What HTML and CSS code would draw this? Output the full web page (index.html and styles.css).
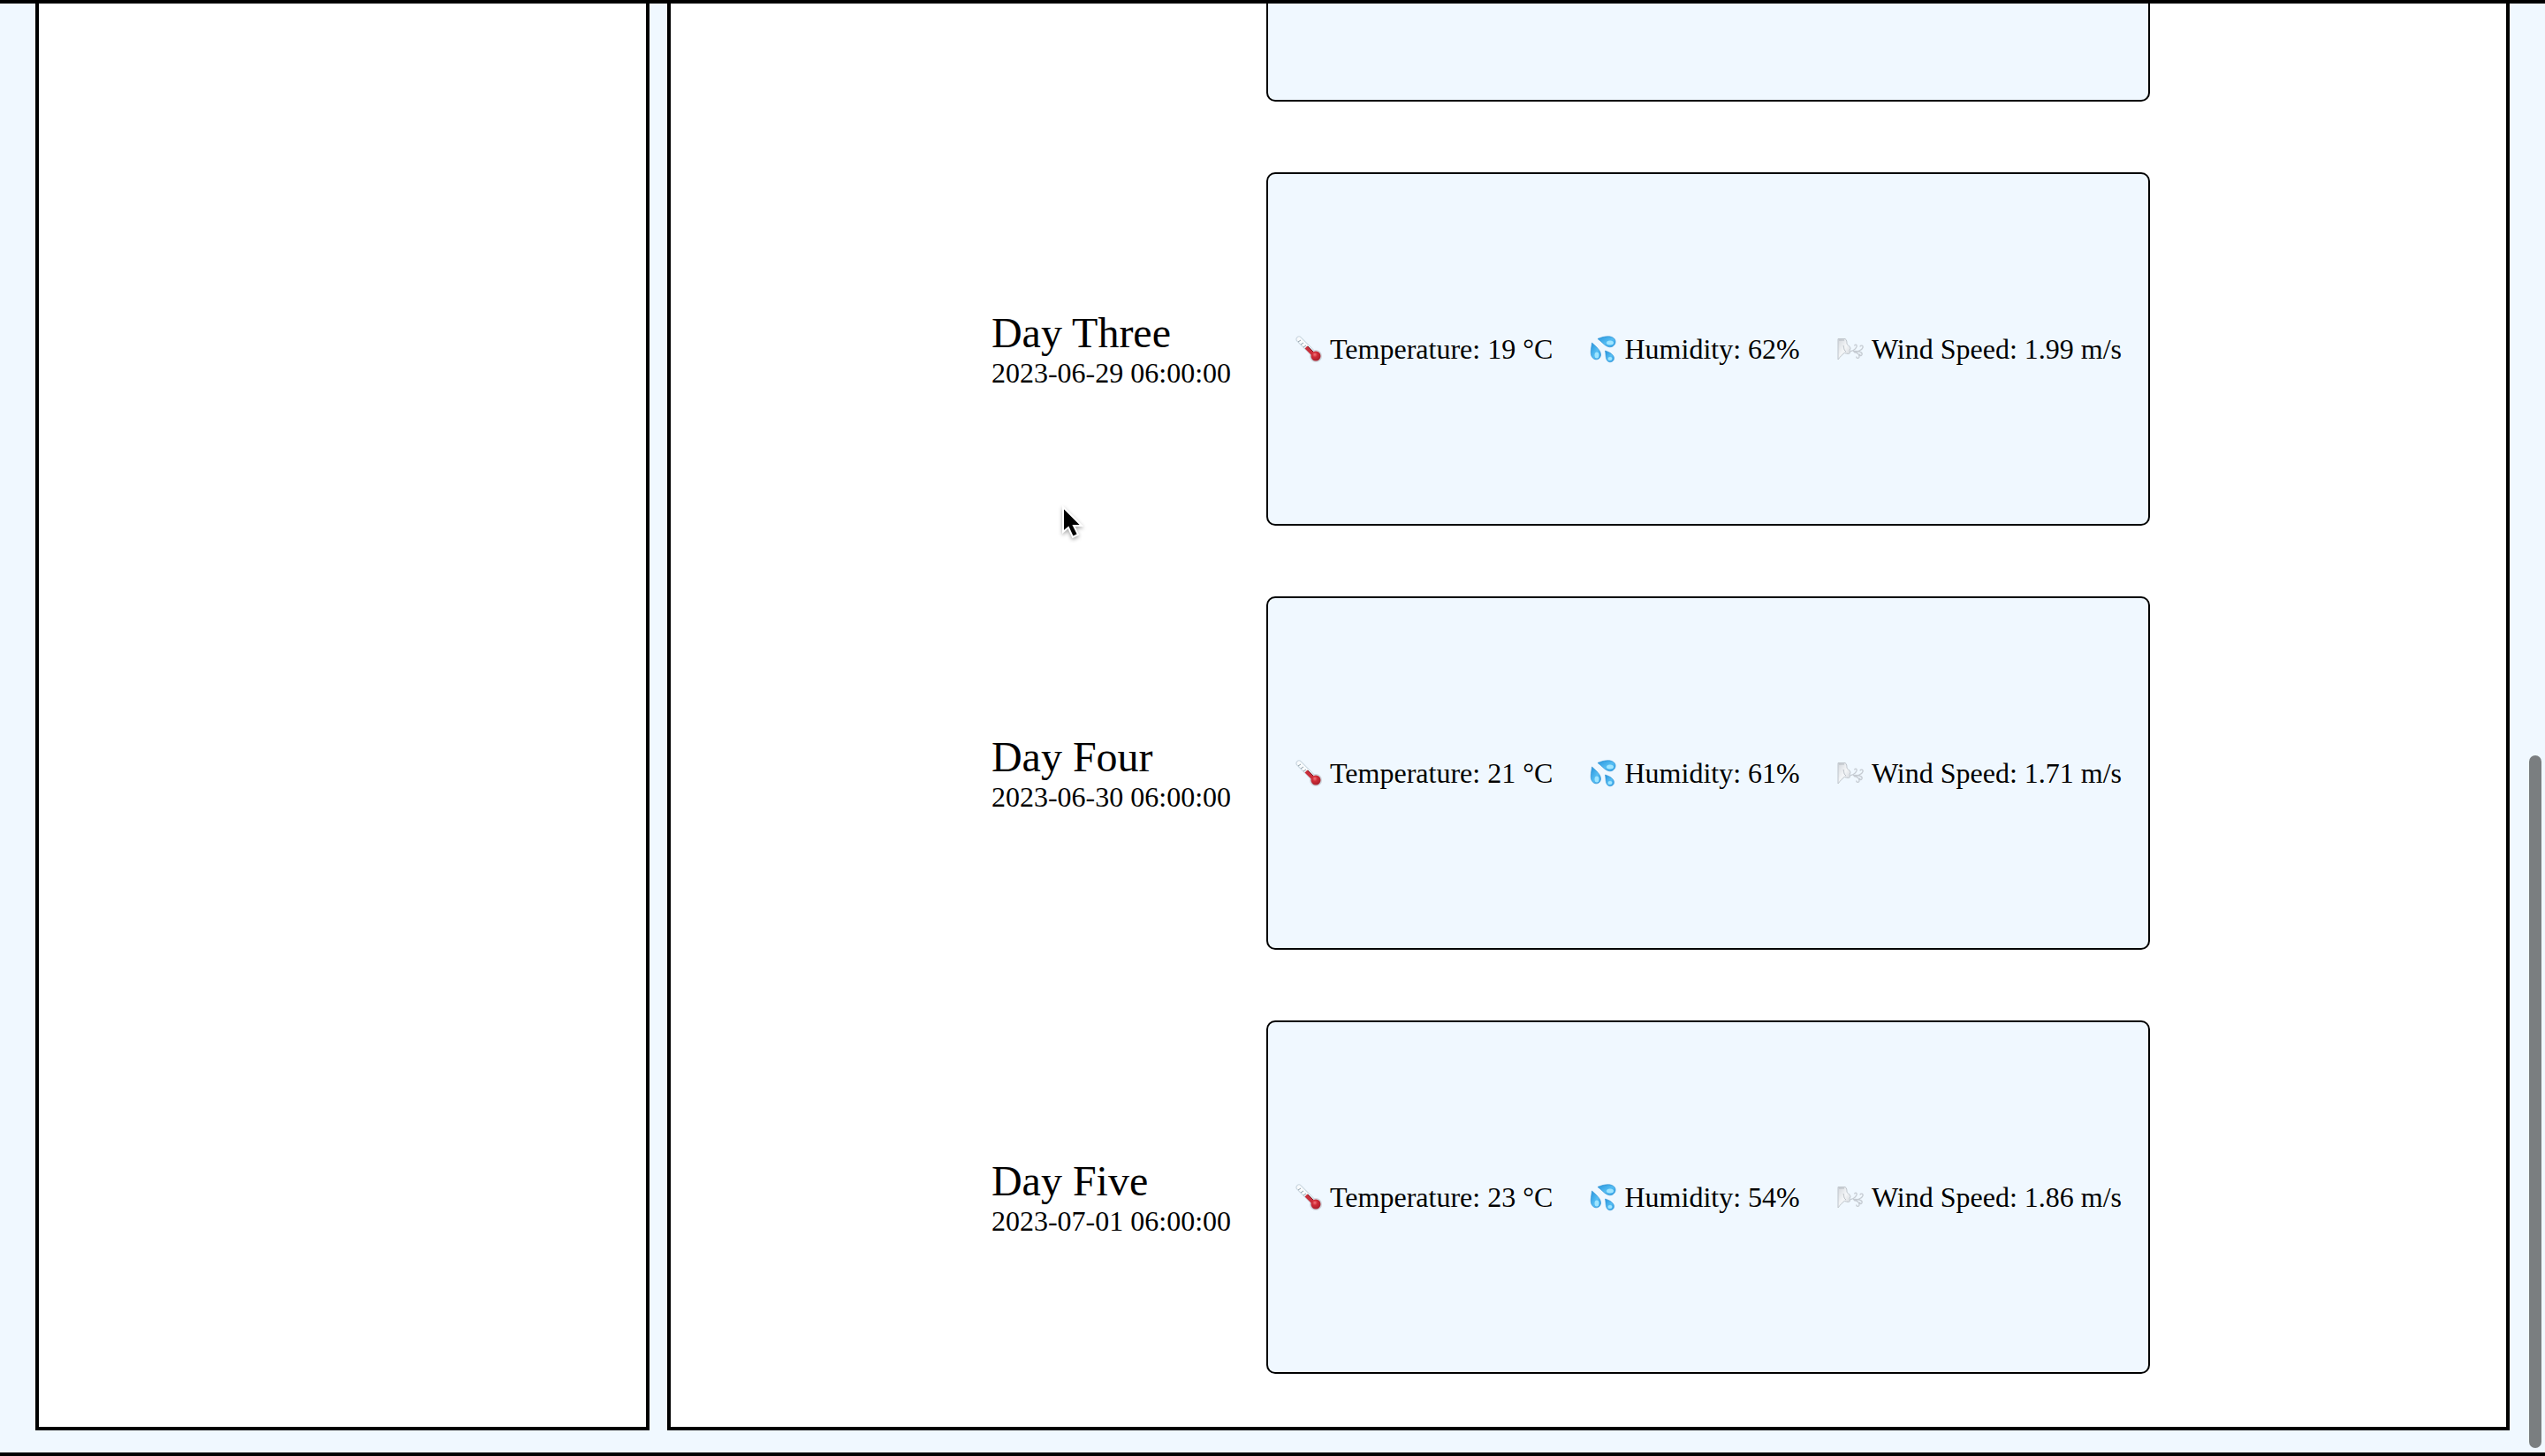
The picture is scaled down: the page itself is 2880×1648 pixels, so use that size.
FILE: index.html
```html
<!DOCTYPE html>
<html lang="en">
<head>
<meta charset="utf-8">
<meta name="viewport" content="width=device-width, initial-scale=1">
<title>Weather forecast</title>
<link rel="stylesheet" href="styles.css">
</head>
<body>
<svg class="sprite" aria-hidden="true">
  <defs>
    <linearGradient id="drop-fill" x1="0" y1="0" x2="1" y2="1">
      <stop offset="0" stop-color="#2794dc"/>
      <stop offset=".55" stop-color="#55bdf3"/>
      <stop offset="1" stop-color="#2c9be2"/>
    </linearGradient>
    <radialGradient id="bulb-fill" cx=".4" cy=".35" r=".65">
      <stop offset="0" stop-color="#f2777c"/>
      <stop offset=".4" stop-color="#d02c37"/>
      <stop offset="1" stop-color="#a81f2c"/>
    </radialGradient>
    <linearGradient id="face-fill" x1="0" y1="0" x2="1" y2="1">
      <stop offset="0" stop-color="#d3d7dc"/>
      <stop offset=".5" stop-color="#f4f6f8"/>
      <stop offset="1" stop-color="#cbd0d6"/>
    </linearGradient>
    <symbol id="thermometer" viewBox="0 0 32 32">
      <path d="M5 5 22 22" stroke="#c9d6df" stroke-width="7" stroke-linecap="round"/>
      <path d="M5 5 22 22" stroke="#f8fbfd" stroke-width="5" stroke-linecap="round"/>
      <circle cx="24" cy="24" r="7" fill="#cfd6dd"/>
      <path d="M13 14 22 23" stroke="#c92f3b" stroke-width="4"/>
      <path d="M15 13 21 19" stroke="#7a2430" stroke-width="1"/>
      <circle cx="24" cy="24" r="5.5" fill="url(#bulb-fill)"/>
      <path d="m4 8 3-2M7 11l3-2M10 14l3-2" stroke="#8e9ea8" stroke-width="1"/>
    </symbol>
    <symbol id="droplets" viewBox="0 0 32 32">
      <g fill="url(#drop-fill)" stroke="#2389cf" stroke-width=".6">
        <path d="M10 4.500C16 2 24 0 28.500 4c3 3 1.500 8-2.500 9.500C20 15.500 15 8 10 4.500Z"/>
        <path d="M3.500 9C8 13 14 18 13.500 23c-.5 4.500-5 6-8 4C0 23.500 3 15 3.500 9Z"/>
        <path d="M18.500 18c5 1.500 10 4.500 10 8.500 0 3-3 5-6 4-4-1.500-3-8-4-12.500Z"/>
      </g>
      <g fill="#9fe5ff">
        <ellipse cx="24" cy="9" rx="4" ry="2.500"/>
        <ellipse cx="9" cy="23" rx="2.500" ry="3.500"/>
        <ellipse cx="24" cy="27" rx="2.500" ry="2"/>
      </g>
    </symbol>
    <symbol id="wind" viewBox="0 0 32 32">
      <path d="M2 4.500h8c2 1 2 4 2 6 2 1.500 4 3.500 4 5l-1 2 .5 3c-1 1.500-3 1-6 0-2 1-5 4-7.500 7.500Z" fill="url(#face-fill)" stroke="#bfc5cb"/>
      <path d="M8 12c1 2 0 5 3 7M3 6h6" fill="none" stroke="#b4bac1"/>
      <path d="M16 18.500c5-.5 6-3 7-5 1-3-3-3-2-1m-2 6c5 1 10-1 11-4 1-3-3-3-3-1m-6 5c5 0 9 1 8 4-1 2-3 1-2-1m-7-2c4 0 6 3 6 5 0 3-4 2-3 0" fill="none" stroke="#c5cbd2" stroke-width="1.300"/>
    </symbol>
  </defs>
</svg>

<main class="dashboard">
  <aside class="panel"></aside>
  <section class="panel forecast" aria-label="Five day forecast">
    <div class="card card-cut"></div>

    <article class="day">
      <header class="day-label">
        <h2>Day Three</h2>
        <time datetime="2023-06-29T06:00:00">2023-06-29 06:00:00</time>
      </header>
      <div class="card">
        <span class="reading"><svg class="icon"><use href="#thermometer"/></svg>Temperature: 19 °C</span>
        <span class="reading"><svg class="icon"><use href="#droplets"/></svg>Humidity: 62%</span>
        <span class="reading"><svg class="icon"><use href="#wind"/></svg>Wind Speed: 1.99 m/s</span>
      </div>
    </article>

    <article class="day">
      <header class="day-label">
        <h2>Day Four</h2>
        <time datetime="2023-06-30T06:00:00">2023-06-30 06:00:00</time>
      </header>
      <div class="card">
        <span class="reading"><svg class="icon"><use href="#thermometer"/></svg>Temperature: 21 °C</span>
        <span class="reading"><svg class="icon"><use href="#droplets"/></svg>Humidity: 61%</span>
        <span class="reading"><svg class="icon"><use href="#wind"/></svg>Wind Speed: 1.71 m/s</span>
      </div>
    </article>

    <article class="day">
      <header class="day-label">
        <h2>Day Five</h2>
        <time datetime="2023-07-01T06:00:00">2023-07-01 06:00:00</time>
      </header>
      <div class="card">
        <span class="reading"><svg class="icon"><use href="#thermometer"/></svg>Temperature: 23 °C</span>
        <span class="reading"><svg class="icon"><use href="#droplets"/></svg>Humidity: 54%</span>
        <span class="reading"><svg class="icon"><use href="#wind"/></svg>Wind Speed: 1.86 m/s</span>
      </div>
    </article>
  </section>
</main>

<div class="scroll-thumb"></div>
<svg class="pointer" viewBox="0 0 28 40" aria-hidden="true">
  <path d="M3 2v28l6-5 5 11 6-3-5-10h9Z" fill="#000" stroke="#fff" stroke-width="2"/>
</svg>
</body>
</html>
```
FILE: styles.css
```css
* {
  box-sizing: border-box;
}

body {
  margin: 0;
  position: relative;
  background: aliceblue;
  color: #000;
  font-family: "Liberation Serif", "Times New Roman", serif;
  font-size: 32px;
  line-height: 37px;
}

.sprite {
  position: absolute;
  width: 0;
  height: 0;
}

.dashboard {
  display: grid;
  grid-template-columns: minmax(0, 1fr) minmax(0, 3fr);
  gap: 20px;
  min-height: 100vh;
  padding: 0 40px 25px;
  border-top: 4px solid #000;
  border-bottom: 4px solid #000;
}

.panel {
  border: 4px solid #000;
  border-top: 0;
  background: #fff;
}

.forecast {
  display: grid;
  grid-template-columns: auto minmax(1000px, auto);
  grid-template-rows: minmax(111px, 1fr) repeat(3, 400px);
  gap: 80px 40px;
  justify-content: center;
  padding: 0 40px 60px 0;
}

.day {
  display: contents;
}

.day-label {
  align-self: center;
}

.day-label h2 {
  margin: 0;
  font-size: 48px;
  font-weight: 400;
  line-height: 55px;
}

.day-label time {
  display: block;
}

.card {
  display: flex;
  align-items: center;
  justify-content: space-between;
  gap: 40px;
  padding: 0 30px;
  border: 2px solid #000;
  border-radius: 10px;
  background: aliceblue;
}

.card-cut {
  grid-column: 2;
  border-top: 0;
  border-radius: 0 0 10px 10px;
}

.reading {
  display: flex;
  align-items: center;
  gap: 8px;
  white-space: nowrap;
}

.icon {
  width: 32px;
  height: 32px;
}

.scroll-thumb {
  position: absolute;
  right: 4px;
  bottom: 9px;
  width: 14px;
  height: 784px;
  border-radius: 7px;
  background: #7a7e80;
}

.pointer {
  position: absolute;
  left: 1200px;
  top: 572px;
  width: 28px;
  height: 40px;
  filter: drop-shadow(0 2px 2px rgba(0, 0, 0, 0.35));
}
```
